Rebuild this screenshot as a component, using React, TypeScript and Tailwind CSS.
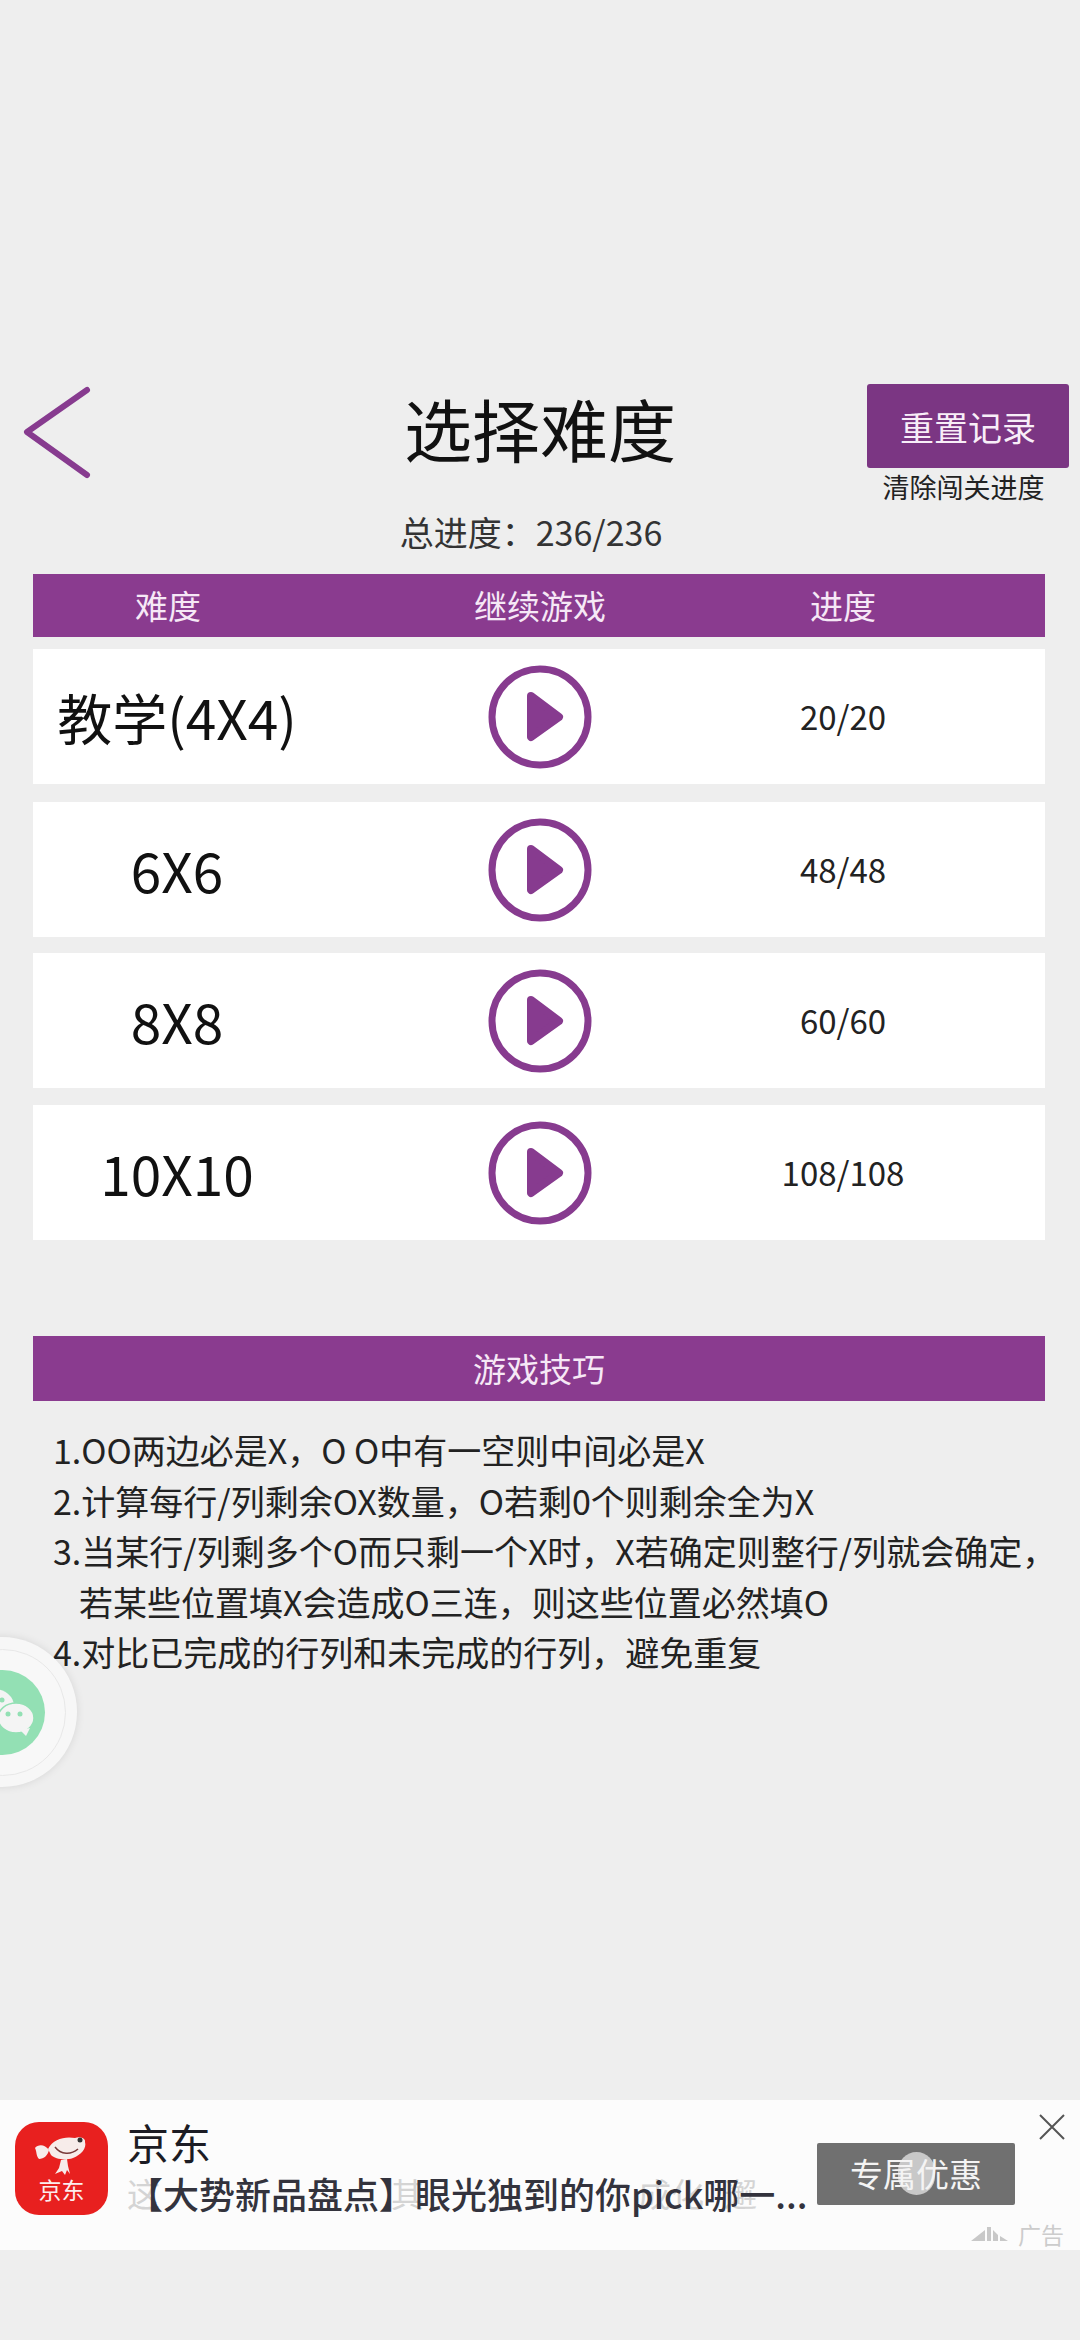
const CJK = "font-['Noto_Sans_CJK_SC','Noto_Sans',sans-serif]";

function Play() {
  return (
    <svg width="104" height="104" viewBox="0 0 104 104" fill="none">
      <circle cx="52" cy="52" r="48" stroke="#873b8f" strokeWidth="7" />
      <path d="M43 31 L71 52 L43 72 Z" fill="#873b8f" stroke="#873b8f" strokeWidth="8" strokeLinejoin="round" />
    </svg>
  );
}

function Row({ label, progress, mt }: { label: string; progress: string; mt: string }) {
  return (
    <div className={`h-[135px] bg-white grid grid-cols-[270px_474px_132px] items-center ${mt}`}>
      <div className="pl-[18px] text-center text-[55px] text-[#111] whitespace-nowrap">{label}</div>
      <div className="flex justify-center"><Play /></div>
      <div className="text-center text-[33px] text-[#222] whitespace-nowrap">{progress}</div>
    </div>
  );
}

export default function App() {
  return (
    <div className={`relative w-[1080px] h-[2340px] overflow-hidden bg-[#eeeeee] pt-[384px] ${CJK}`}>
      <div className="flex items-start pl-[21px] pr-[11px] h-[120px]">
        <svg width="72" height="96" viewBox="0 0 72 96" fill="none" className="mt-[1px] shrink-0">
          <path d="M66 5 L6 47 L66 90" stroke="#873b8f" strokeWidth="6" strokeLinecap="round" strokeLinejoin="round" />
        </svg>
        <div className="flex-1 text-center text-[68px] leading-[84px] text-[#111] pl-[120px] pt-[2px] whitespace-nowrap">选择难度</div>
        <div className="w-[202px] shrink-0 flex flex-col items-center">
          <div className="w-[202px] h-[84px] rounded-[3px] bg-[#7b3683] flex items-center justify-center text-[34px] text-[#f8eef8]">重置记录</div>
          <div className="text-[27px] leading-[38px] text-[#222] mr-[9px] whitespace-nowrap">清除闯关进度</div>
        </div>
      </div>
      <div className="text-center text-[34px] leading-[44px] text-[#333] mt-[6px] -ml-[18px]">总进度：236/236</div>
      <div className="mx-[33px] mt-[20px] w-[1012px]">
        <div className="h-[63px] bg-[#8a3b8f] grid grid-cols-[270px_474px_132px] items-center text-center text-[33px] text-[#f6e8f6]">
          <div>难度</div>
          <div>继续游戏</div>
          <div>进度</div>
        </div>
        <Row label="教学(4X4)" progress="20/20" mt="mt-[12px]" />
        <Row label="6X6" progress="48/48" mt="mt-[18px]" />
        <Row label="8X8" progress="60/60" mt="mt-[16px]" />
        <Row label="10X10" progress="108/108" mt="mt-[17px]" />
        <div className="mt-[96px] h-[65px] bg-[#8a3b8f] flex items-center justify-center text-[33px] text-[#f6e8f6]">游戏技巧</div>
        <div className="mt-[24px] pl-[20px] text-[34px] leading-[50.5px] text-[#222] whitespace-nowrap">
          <div>1.OO两边必是X，O O中有一空则中间必是X</div>
          <div>2.计算每行/列剩余OX数量，O若剩0个则剩余全为X</div>
          <div>3.当某行/列剩多个O而只剩一个X时，X若确定则整行/列就会确定，</div>
          <div className="pl-[26px]">若某些位置填X会造成O三连，则这些位置必然填O</div>
          <div>4.对比已完成的行列和未完成的行列，避免重复</div>
        </div>
      </div>

      {/* floating WeChat bubble */}
      <div className="absolute left-[-73px] top-[1637px] w-[150px] h-[150px] rounded-full bg-[#f7f7f7] shadow-[0_0_8px_rgba(0,0,0,0.10)] flex items-center justify-center">
        <div className="w-[127px] h-[127px] rounded-full border border-[#e8e8e8] bg-[#f8f8f8] flex items-center justify-center">
          <div className="w-[85px] h-[85px] rounded-full bg-[#93e0b4] overflow-hidden">
            <svg width="85" height="85" viewBox="0 0 85 85">
              <ellipse cx="34" cy="36" rx="20" ry="17" fill="#f4f4f4" />
              <circle cx="42" cy="30" r="2.5" fill="#93e0b4" />
              <ellipse cx="56" cy="48" rx="18" ry="15" fill="#f4f4f4" stroke="#93e0b4" strokeWidth="1.5" />
              <path d="M60 60 L66 66 L70 58 Z" fill="#f4f4f4" />
              <circle cx="48" cy="44" r="2.5" fill="#93e0b4" />
              <circle cx="60" cy="44" r="2.5" fill="#93e0b4" />
            </svg>
          </div>
        </div>
      </div>

      {/* ad banner */}
      <div className="absolute left-0 top-[2100px] w-[1080px] h-[150px] bg-[#fcfcfc] flex items-start pl-[15px]">
        <div className="relative mt-[22px] w-[93px] h-[93px] rounded-[24px] bg-[#e8201f] shrink-0 overflow-hidden">
          <svg width="93" height="60" viewBox="0 0 93 60" className="absolute left-0 top-0" fill="none">
            <path d="M33 27 C38 17 50 14 60 16 C66 14 71 17 70 20 C72 26 66 33 58 36 C50 39 40 37 36 33 Z" fill="#f7ecea" />
            <path d="M34 28 C30 22 23 22 20 26 C22 30 21 34 24 37 C29 37 33 33 34 28 Z" fill="#f7ecea" />
            <path d="M46 38 L44 46 L40 52 L47 49 L50 53 L52 48 L55 52 L53 44 L52 37 Z" fill="#f7ecea" />
            <circle cx="65" cy="18" r="2.5" fill="#333" />
            <path d="M40 25 C46 33 56 33 63 27" stroke="#7a3a3a" strokeWidth="1.5" />
          </svg>
          <div className="absolute left-0 right-0 bottom-[14px] text-center text-[23px] leading-[24px] text-[#fbeeee]">京东</div>
        </div>
        <div className="relative ml-[19px] w-[680px] shrink-0 pt-[16px]">
          <div className="text-[42px] leading-[52px] text-[#1c1c24]">京东</div>
          <div className="relative mt-[3px] h-[44px]">
            <div className="absolute left-0 top-0 text-[33px] leading-[44px] text-[#d4d4d4] whitespace-nowrap">这　　　　　　　其　　　　　　<span className="ml-[16px]">成化</span><span className="ml-[20px]">邂</span></div>
            <div className="absolute left-0 top-0 text-[36px] leading-[44px] text-[#33333d] whitespace-nowrap font-medium">【大势新品盘点】眼光独到的你pick哪一...</div>
          </div>
        </div>
        <div className="absolute left-[817px] top-[43px] w-[198px] h-[62px] rounded-[2px] bg-[#707070] flex items-center justify-center text-[33px] text-[#f4f4f4]">
          <span className="absolute left-[81px] top-[9px] w-[37px] h-[43px] rounded-full bg-[#c8c8c8]" />
          <span className="relative">专属优惠</span>
        </div>
        <svg width="26" height="26" viewBox="0 0 26 26" className="absolute left-[1039px] top-[14px]" fill="none">
          <path d="M1 1 L25 25 M25 1 L1 25" stroke="#555" strokeWidth="2" />
        </svg>
        <div className="absolute left-[971px] top-[122px] flex items-center gap-[9px] text-[23px] leading-[24px] text-[#cccccc]">
          <svg width="38" height="16" viewBox="0 0 38 16" fill="#c8c8c8"><path d="M0 15 L14 4 L14 15 Z M16 15 L16 1 L20 1 L20 15 Z M22 15 L22 4 L27 9 L27 15 Z M29 15 L29 10 L37 15 Z" /></svg>
          <span>广告</span>
        </div>
      </div>
    </div>
  );
}
